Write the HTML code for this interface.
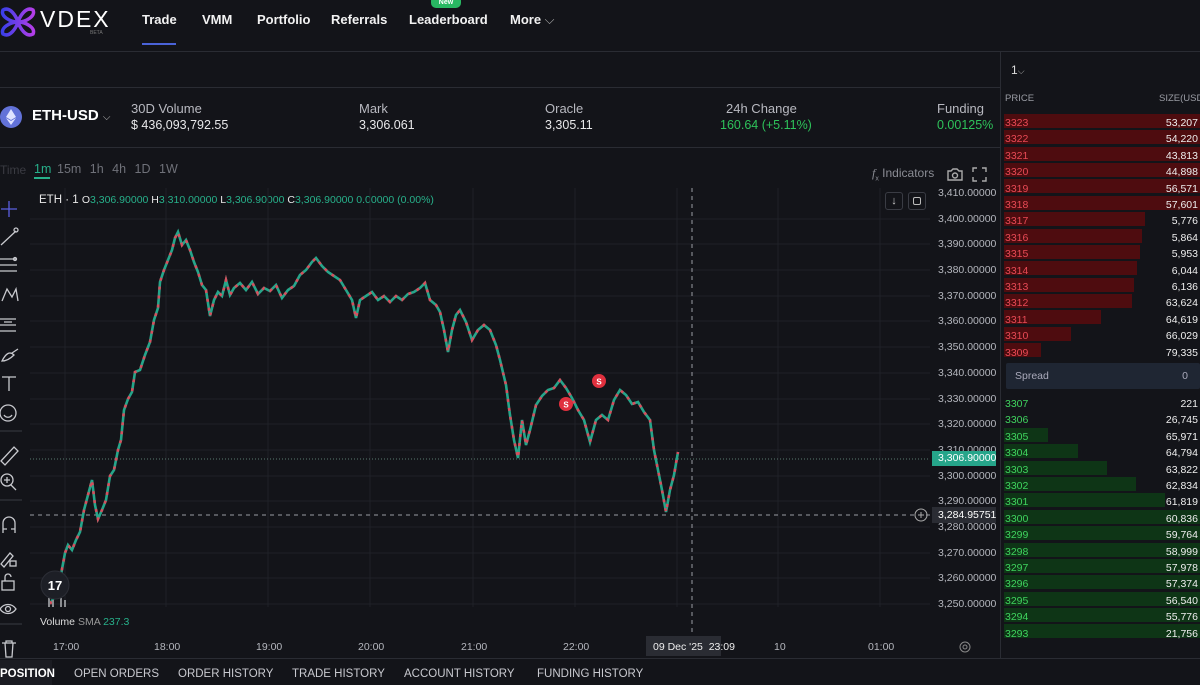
<!DOCTYPE html>
<html><head><meta charset="utf-8"><style>
*{margin:0;padding:0;box-sizing:border-box}
body{width:1200px;height:685px;overflow:hidden;background:#131419;font-family:"Liberation Sans",sans-serif;color:#e6e6ea;position:relative}
.a{position:absolute;white-space:nowrap}
.nav{font-weight:bold;font-size:13px;top:12px;color:#f2f2f2}
.lbl{font-size:13px;color:#b8b9c0}
.val{font-size:12.5px;color:#e8e8ea}
.g{color:#2ec25a}
.ax{font-size:10.5px;color:#b4b6bd;left:938px}
.ob div{position:absolute;left:1004px;height:14px;font-size:10.5px}
.tab{top:668px;font-size:11.5px;color:#c8c9cf}
</style></head><body>
<svg class="a" style="left:0;top:6px" width="36" height="32" viewBox="0 0 36 32"><defs><linearGradient id="lg" x1="0" x2="1"><stop offset="0" stop-color="#3b3fe8"/><stop offset="1" stop-color="#b43ee8"/></linearGradient></defs><path d="M3 4 C10 0 16 10 18 16 C20 10 26 0 33 4 C36 10 26 16 18 16 C26 16 36 22 33 28 C26 32 20 22 18 16 C16 22 10 32 3 28 C0 22 10 16 18 16 C10 16 0 10 3 4Z" fill="none" stroke="url(#lg)" stroke-width="3.5"/></svg>
<div class="a" style="left:40px;top:6px;font-size:23px;letter-spacing:2px;color:#fff">VDEX</div>
<div class="a" style="left:90px;top:30px;font-size:5px;color:#777">BETA</div>
<div class="a nav" style="left:142px">Trade</div>
<div class="a" style="left:142px;top:43px;width:34px;height:2px;background:#4a63d8"></div>
<div class="a nav" style="left:202px">VMM</div>
<div class="a nav" style="left:257px">Portfolio</div>
<div class="a nav" style="left:331px">Referrals</div>
<div class="a nav" style="left:409px">Leaderboard</div>
<div class="a" style="left:431px;top:-4px;width:30px;height:12px;border-radius:5px;background:#28b862;font-size:7px;color:#fff;text-align:center;line-height:14px;font-weight:bold">New</div>
<div class="a nav" style="left:510px">More <span style="font-weight:normal;color:#aaa">⌵</span></div>
<div class="a" style="left:0;top:51px;width:1200px;height:1px;background:#2a2c33"></div>
<div class="a" style="left:0;top:87px;width:1000px;height:1px;background:#2a2c33"></div>
<div class="a" style="left:0;top:147px;width:1000px;height:1px;background:#2a2c33"></div>
<div class="a" style="left:1000px;top:51px;width:1px;height:608px;background:#2a2c33"></div>
<div class="a" style="left:0;top:106px;width:22px;height:22px;border-radius:50%;background:#6272d8"></div>
<svg class="a" style="left:6px;top:109px" width="10" height="16" viewBox="0 0 10 16"><path d="M5 0L0 8L5 11L10 8Z M0 9L5 16L10 9L5 12Z" fill="#dfe3ff"/></svg>
<div class="a" style="left:32px;top:107px;font-size:15px;font-weight:bold;color:#fff">ETH-USD <span style="font-size:10px;font-weight:normal;color:#bbb">⌵</span></div>
<div class="a lbl" style="left:131px;top:101px">30D Volume</div>
<div class="a val" style="left:131px;top:118px">$ 436,093,792.55</div>
<div class="a lbl" style="left:359px;top:101px">Mark</div>
<div class="a val" style="left:359px;top:118px">3,306.061</div>
<div class="a lbl" style="left:545px;top:101px">Oracle</div>
<div class="a val" style="left:545px;top:118px">3,305.11</div>
<div class="a lbl" style="left:726px;top:101px">24h Change</div>
<div class="a val g" style="left:720px;top:118px">160.64 (+5.11%)</div>
<div class="a lbl" style="left:937px;top:101px">Funding</div>
<div class="a val g" style="left:937px;top:118px">0.00125%</div>
<div class="a" style="left:0;top:163px;font-size:12px;color:#3a3b42">Time</div>
<div class="a" style="left:34px;top:162px;font-size:12.5px;color:#27b08a">1m</div>
<div class="a" style="left:34px;top:177px;width:16px;height:2px;background:#27b08a"></div>
<div class="a" style="left:57px;top:162px;font-size:12.5px;color:#6f7179;word-spacing:5px">15m 1h 4h 1D 1W</div>
<div class="a" style="left:872px;top:166px;font-size:12px;color:#8a8c94"><i style="font-family:'Liberation Serif'">f</i><sub style="font-size:7px">x</sub> Indicators</div>
<svg class="a" style="left:946px;top:167px" width="18" height="15" viewBox="0 0 18 15" fill="none" stroke="#aaa" stroke-width="1.4"><path d="M2 4h3l2-2h4l2 2h3v9H2z"/><circle cx="9" cy="8.5" r="2.5"/></svg>
<svg class="a" style="left:972px;top:167px" width="15" height="15" viewBox="0 0 15 15" fill="none" stroke="#aaa" stroke-width="1.4"><path d="M1 5V1h4M10 1h4v4M14 10v4h-4M5 14H1v-4"/></svg>
<div class="a" style="left:885px;top:192px;width:18px;height:18px;border:1px solid #3a3c44;border-radius:3px;font-size:11px;color:#ccc;text-align:center;line-height:16px">↓</div>
<div class="a" style="left:908px;top:192px;width:18px;height:18px;border:1px solid #3a3c44;border-radius:3px"></div>
<div class="a" style="left:913px;top:197px;width:8px;height:8px;border:1.3px solid #bbb;border-radius:2px"></div>
<div class="a" style="left:39px;top:194px;font-size:11.5px;color:#e8e8e8">ETH · 1 <span style="font-size:10.5px">O<span style="color:#27b08a">3,306.90000</span> H<span style="color:#27b08a">3,310.00000</span> L<span style="color:#27b08a">3,306.90000</span> C<span style="color:#27b08a">3,306.90000 0.00000 (0.00%)</span></span></div>
<svg class="a" style="left:0;top:180px" width="1000" height="480" viewBox="0 180 1000 480">
<g stroke="#1f2128" stroke-width="1">
<line x1="30" y1="219" x2="930" y2="219"/><line x1="30" y1="244" x2="930" y2="244"/><line x1="30" y1="270" x2="930" y2="270"/><line x1="30" y1="296" x2="930" y2="296"/><line x1="30" y1="321" x2="930" y2="321"/><line x1="30" y1="347" x2="930" y2="347"/><line x1="30" y1="373" x2="930" y2="373"/><line x1="30" y1="399" x2="930" y2="399"/><line x1="30" y1="424" x2="930" y2="424"/><line x1="30" y1="450" x2="930" y2="450"/><line x1="30" y1="476" x2="930" y2="476"/><line x1="30" y1="501" x2="930" y2="501"/><line x1="30" y1="527" x2="930" y2="527"/><line x1="30" y1="553" x2="930" y2="553"/><line x1="30" y1="578" x2="930" y2="578"/><line x1="30" y1="604" x2="930" y2="604"/>
<line x1="65" y1="188" x2="65" y2="607"/><line x1="166" y1="188" x2="166" y2="607"/><line x1="268" y1="188" x2="268" y2="607"/><line x1="370" y1="188" x2="370" y2="607"/><line x1="473" y1="188" x2="473" y2="607"/><line x1="575" y1="188" x2="575" y2="607"/><line x1="677" y1="188" x2="677" y2="607"/><line x1="778" y1="188" x2="778" y2="607"/><line x1="880" y1="188" x2="880" y2="607"/>
</g>
<line x1="30" y1="459" x2="930" y2="459" stroke="#5a7a70" stroke-dasharray="1 2"/>
<line x1="30" y1="515" x2="930" y2="515" stroke="#9a9ca4" stroke-dasharray="4 4"/>
<line x1="692" y1="188" x2="692" y2="640" stroke="#9a9ca4" stroke-dasharray="4 4"/>
<g id="pl">
<polyline fill="none" stroke="#26a58a" stroke-width="2.6" points="50,604 55,596 60,580 65,553 68,545 72,550 76,540 80,532 84,510 88,495 92,480 95,505 98,519 102,510 106,500 110,476 114,470 118,450 121,440 124,410 128,399 132,392 135,372 140,370 145,355 150,342 154,320 158,308 160,282 164,270 168,260 172,250 175,238 178,232 182,245 186,240 190,250 194,262 198,272 202,285 206,290 210,316 214,300 218,292 222,296 226,280 230,295 234,288 240,283 246,290 252,282 258,294 264,288 270,291 276,285 282,298 288,290 294,286 300,275 306,270 312,262 316,258 322,266 328,272 334,276 340,280 346,290 352,300 356,318 360,300 366,296 372,292 378,300 384,296 390,302 396,296 402,300 408,294 414,292 420,288 425,283 430,300 436,305 440,312 444,330 448,352 452,330 456,315 460,310 466,322 472,340 478,330 484,325 490,330 496,345 500,360 506,385 510,415 514,440 518,458 522,420 526,445 530,430 536,405 542,396 548,390 554,388 560,380 566,388 572,398 578,410 584,420 590,442 596,420 602,415 608,420 614,400 620,390 626,395 632,404 638,402 644,412 650,420 654,450 658,470 662,490 666,512 670,490 674,475 678,452"/>
</g>
<polyline fill="none" stroke="#d5505e" stroke-width="2.6" stroke-dasharray="3 6" points="50,604 55,596 60,580 65,553 68,545 72,550 76,540 80,532 84,510 88,495 92,480 95,505 98,519 102,510 106,500 110,476 114,470 118,450 121,440 124,410 128,399 132,392 135,372 140,370 145,355 150,342 154,320 158,308 160,282 164,270 168,260 172,250 175,238 178,232 182,245 186,240 190,250 194,262 198,272 202,285 206,290 210,316 214,300 218,292 222,296 226,280 230,295 234,288 240,283 246,290 252,282 258,294 264,288 270,291 276,285 282,298 288,290 294,286 300,275 306,270 312,262 316,258 322,266 328,272 334,276 340,280 346,290 352,300 356,318 360,300 366,296 372,292 378,300 384,296 390,302 396,296 402,300 408,294 414,292 420,288 425,283 430,300 436,305 440,312 444,330 448,352 452,330 456,315 460,310 466,322 472,340 478,330 484,325 490,330 496,345 500,360 506,385 510,415 514,440 518,458 522,420 526,445 530,430 536,405 542,396 548,390 554,388 560,380 566,388 572,398 578,410 584,420 590,442 596,420 602,415 608,420 614,400 620,390 626,395 632,404 638,402 644,412 650,420 654,450 658,470 662,490 666,512 670,490 674,475 678,452"/>
<circle cx="566" cy="404" r="7" fill="#e0303e"/><text x="566" y="407.5" font-size="8" fill="#fff" text-anchor="middle" font-family="Liberation Sans" font-weight="bold">S</text>
<circle cx="599" cy="381" r="7" fill="#e0303e"/><text x="599" y="384.5" font-size="8" fill="#fff" text-anchor="middle" font-family="Liberation Sans" font-weight="bold">S</text>
<g fill="#8a8c90"><rect x="48" y="598" width="2" height="9"/><rect x="52" y="600" width="2" height="7"/><rect x="60" y="598" width="2" height="9"/><rect x="64" y="600" width="2" height="7"/></g>
<circle cx="55" cy="585" r="14" fill="#1d1f26" stroke="#2c2e36"/><text x="55" y="590" font-size="13" fill="#fff" text-anchor="middle" font-family="Liberation Sans" font-weight="bold">17</text>
<circle cx="921" cy="515" r="6" fill="none" stroke="#aaa"/><path d="M918 515h6M921 512v6" stroke="#aaa"/>
<circle cx="965" cy="647" r="5" fill="none" stroke="#888"/><circle cx="965" cy="647" r="2" fill="none" stroke="#888"/>
</svg>
<div class="a ax" style="top:187px">3,410.00000</div><div class="a ax" style="top:213px">3,400.00000</div><div class="a ax" style="top:238px">3,390.00000</div><div class="a ax" style="top:264px">3,380.00000</div><div class="a ax" style="top:290px">3,370.00000</div><div class="a ax" style="top:315px">3,360.00000</div><div class="a ax" style="top:341px">3,350.00000</div><div class="a ax" style="top:367px">3,340.00000</div><div class="a ax" style="top:393px">3,330.00000</div><div class="a ax" style="top:418px">3,320.00000</div><div class="a ax" style="top:444px">3,310.00000</div><div class="a ax" style="top:470px">3,300.00000</div><div class="a ax" style="top:495px">3,290.00000</div><div class="a ax" style="top:521px">3,280.00000</div><div class="a ax" style="top:547px">3,270.00000</div><div class="a ax" style="top:572px">3,260.00000</div><div class="a ax" style="top:598px">3,250.00000</div>
<div class="a" style="left:932px;top:451px;width:64px;height:15px;background:#26a58a;font-size:10.5px;color:#fff;padding:1px 0 0 6px">3,306.90000</div>
<div class="a" style="left:932px;top:507px;width:64px;height:16px;background:#2a2c33;font-size:10.5px;color:#fff;padding:2px 0 0 6px">3,284.95751</div>
<div class="a" style="left:40px;top:616px;font-size:10.5px;color:#ddd">Volume <span style="color:#999">SMA</span> <span style="color:#27b08a">237.3</span></div>
<div class="a" style="left:53px;top:641px;font-size:10.5px;color:#b4b6bd">17:00</div>
<div class="a" style="left:154px;top:641px;font-size:10.5px;color:#b4b6bd">18:00</div>
<div class="a" style="left:256px;top:641px;font-size:10.5px;color:#b4b6bd">19:00</div>
<div class="a" style="left:358px;top:641px;font-size:10.5px;color:#b4b6bd">20:00</div>
<div class="a" style="left:461px;top:641px;font-size:10.5px;color:#b4b6bd">21:00</div>
<div class="a" style="left:563px;top:641px;font-size:10.5px;color:#b4b6bd">22:00</div>
<div class="a" style="left:646px;top:636px;width:75px;height:20px;background:#2a2c33;font-size:10.5px;color:#eee;padding:5px 0 0 7px">09 Dec '25 &nbsp;23:09</div>
<div class="a" style="left:774px;top:641px;font-size:10.5px;color:#b4b6bd">10</div>
<div class="a" style="left:868px;top:641px;font-size:10.5px;color:#b4b6bd">01:00</div>
<svg class="a" style="left:0;top:195px" width="26" height="465" viewBox="0 0 26 465" fill="none" stroke="#c8c9ce" stroke-width="1.3">
<path d="M9 6v16M1 14h16" stroke="#5a5fe0"/>
<path d="M1 50L16 36"/><circle cx="16" cy="35" r="2"/>
<path d="M0 64h17M0 70h17M0 76h17"/><circle cx="15" cy="64" r="1.5"/>
<path d="M2 106L7 94L12 102L16 94L18 106"/>
<path d="M0 124h16M0 130h16M0 136h16M4 127h8" />
<path d="M2 166c4-8 8-10 12-6c-4 4-8 6-12 6zM12 158l6-4"/>
<path d="M2 182h14M9 182v14"/>
<circle cx="8" cy="218" r="8"/><path d="M4 220c2 3 6 3 8 0"/>
<path d="M0 236h22" stroke="#33353c"/>
<path d="M1 266L14 252l4 4L5 270z"/>
<circle cx="7" cy="285" r="6"/><path d="M11 290l5 5M4 285h6M7 282v6"/>
<path d="M0 305h22" stroke="#33353c"/>
<path d="M3 338v-10a6 6 0 0 1 12 0v10M3 334h4M11 334h4"/>
<path d="M1 369L10 358l3 3L4 372z"/><rect x="10" y="366" width="6" height="5"/>
<rect x="2" y="386" width="12" height="9"/><path d="M5 386v-4a3 3 0 0 1 6 0"/>
<path d="M0 414c4-6 12-6 16 0c-4 6-12 6-16 0z"/><circle cx="8" cy="414" r="2.5"/>
<path d="M0 429h22" stroke="#33353c"/>
<path d="M2 448h14M5 448l1 14h6l1-14M6 448v-2h6v2"/>
</svg>
<div class="a" style="left:1011px;top:63px;font-size:12px;color:#ddd">1<span style="font-size:9px;color:#aaa">⌵</span></div>
<div class="a" style="left:1005px;top:93px;font-size:9.5px;color:#9a9ca4">PRICE</div>
<div class="a" style="left:1159px;top:93px;font-size:9.5px;color:#9a9ca4">SIZE(USD</div>
<div class="ob">
<div style="top:114px;width:196px;background:#4e0c0f"></div>
<div style="top:130px;width:196px;background:#4e0c0f"></div>
<div style="top:147px;width:196px;background:#4e0c0f"></div>
<div style="top:163px;width:196px;background:#4e0c0f"></div>
<div style="top:179px;width:196px;background:#4e0c0f"></div>
<div style="top:196px;width:196px;background:#4e0c0f"></div>
<div style="top:212px;width:141px;background:#4e0c0f"></div>
<div style="top:229px;width:138px;background:#4e0c0f"></div>
<div style="top:245px;width:136px;background:#4e0c0f"></div>
<div style="top:261px;width:133px;background:#4e0c0f"></div>
<div style="top:278px;width:130px;background:#4e0c0f"></div>
<div style="top:294px;width:128px;background:#4e0c0f"></div>
<div style="top:310px;width:97px;background:#4e0c0f"></div>
<div style="top:327px;width:67px;background:#4e0c0f"></div>
<div style="top:343px;width:37px;background:#4e0c0f"></div>
<div style="top:428px;width:44px;background:#0e3516"></div>
<div style="top:444px;width:74px;background:#0e3516"></div>
<div style="top:461px;width:103px;background:#0e3516"></div>
<div style="top:477px;width:132px;background:#0e3516"></div>
<div style="top:493px;width:161px;background:#0e3516"></div>
<div style="top:510px;width:196px;background:#0e3516"></div>
<div style="top:526px;width:196px;background:#0e3516"></div>
<div style="top:543px;width:196px;background:#0e3516"></div>
<div style="top:559px;width:196px;background:#0e3516"></div>
<div style="top:575px;width:196px;background:#0e3516"></div>
<div style="top:592px;width:196px;background:#0e3516"></div>
<div style="top:608px;width:196px;background:#0e3516"></div>
<div style="top:624px;width:196px;background:#0e3516"></div>
</div>
<div class="a" style="left:1005px;top:115px;font-size:10.5px;line-height:16.4px;color:#e84a55">3323<br>3322<br>3321<br>3320<br>3319<br>3318<br>3317<br>3316<br>3315<br>3314<br>3313<br>3312<br>3311<br>3310<br>3309</div>
<div class="a" style="right:2px;top:115px;font-size:10.5px;line-height:16.4px;color:#eee;text-align:right">53,207<br>54,220<br>43,813<br>44,898<br>56,571<br>57,601<br>5,776<br>5,864<br>5,953<br>6,044<br>6,136<br>63,624<br>64,619<br>66,029<br>79,335</div>
<div class="a" style="left:1006px;top:363px;width:194px;height:26px;background:#1f2633;border-radius:2px;font-size:10.5px;color:#aab;padding:7px 0 0 9px">Spread<span style="position:absolute;right:12px">0</span></div>
<div class="a" style="left:1005px;top:396px;font-size:10.5px;line-height:16.4px;color:#3fd35e">3307<br>3306<br>3305<br>3304<br>3303<br>3302<br>3301<br>3300<br>3299<br>3298<br>3297<br>3296<br>3295<br>3294<br>3293</div>
<div class="a" style="right:2px;top:396px;font-size:10.5px;line-height:16.4px;color:#eee;text-align:right">221<br>26,745<br>65,971<br>64,794<br>63,822<br>62,834<br>61,819<br>60,836<br>59,764<br>58,999<br>57,978<br>57,374<br>56,540<br>55,776<br>21,756</div>
<div class="a" style="left:0;top:658px;width:1200px;height:1px;background:#2a2c33"></div>
<div class="a" style="left:0;top:660px;width:52px;height:25px;background:#1b1c22"></div>
<div class="a tab" style="left:0;color:#fff;font-weight:bold">POSITION</div>
<div class="a tab" style="left:74px">OPEN ORDERS</div>
<div class="a tab" style="left:178px">ORDER HISTORY</div>
<div class="a tab" style="left:292px">TRADE HISTORY</div>
<div class="a tab" style="left:404px">ACCOUNT HISTORY</div>
<div class="a tab" style="left:537px">FUNDING HISTORY</div>
</body></html>
